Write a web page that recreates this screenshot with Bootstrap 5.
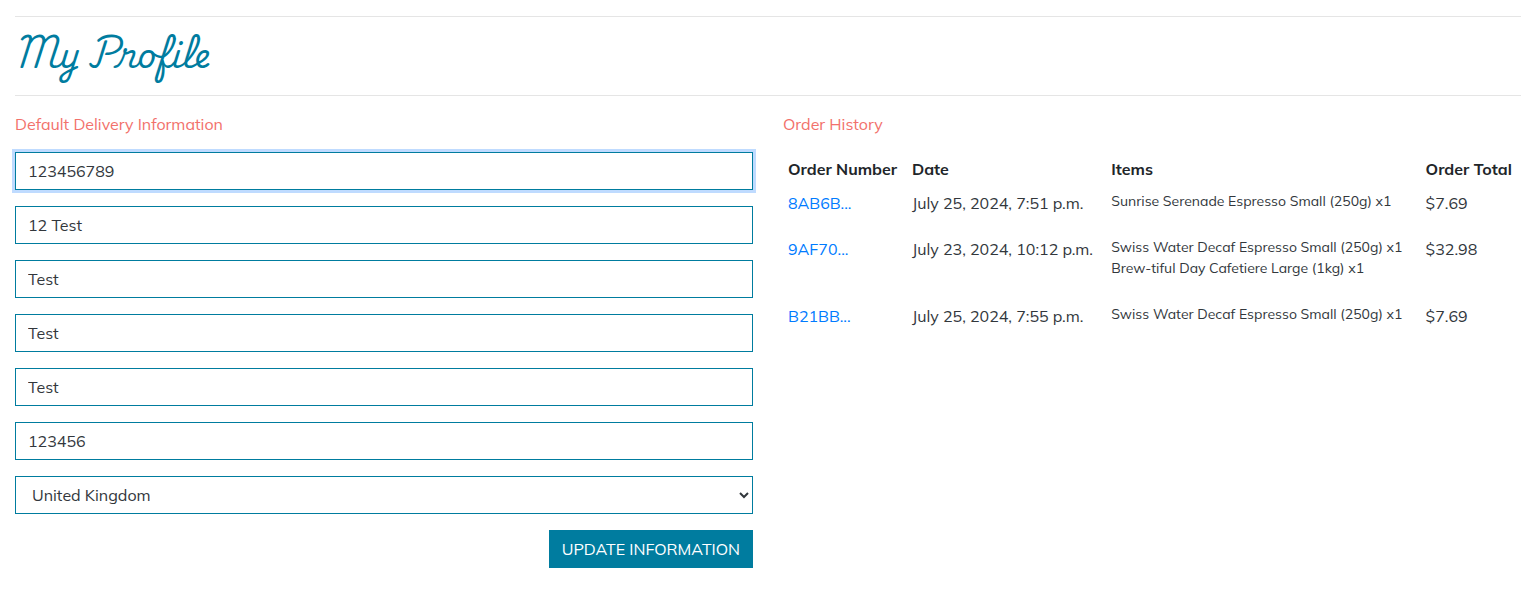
<!DOCTYPE html>
<html lang="en">
<head>
<meta charset="utf-8">
<meta name="viewport" content="width=device-width, initial-scale=1">
<title>My Profile</title>
<link href="https://cdn.jsdelivr.net/npm/bootstrap@5.3.0/dist/css/bootstrap.min.css" rel="stylesheet">
<style>
  :root { --brand: #007c9f; --accent: #f2716b; --ink: #32373c; }
  body { font-family: Mulish, Muli, Lato, sans-serif; font-size: 16px; color: var(--ink); }
  .profile-page { padding-left: 15px; padding-right: 3px; }
  .profile-row { --bs-gutter-x: 30px; }
  .rule { margin: 0; border-top: 1px solid #e5e5e5; opacity: 1; }
  .page-title { font-family: "Playwrite IE", "Playwrite US Trad", Lato, cursive; font-size: 32px; font-weight: 400; line-height: 70px; color: var(--brand); margin: 0; }
  .section-title { color: var(--accent); line-height: 24px; }
  .field { height: 38px; border: 1px solid var(--brand); border-radius: 0; color: var(--ink); caret-color: transparent; }
  .field:focus { border-color: var(--brand); box-shadow: 0 0 0 3px #bfdbff; color: var(--ink); }
  select.field { appearance: auto; }
  .btn-brand { --bs-btn-color: #fff; --bs-btn-bg: var(--brand); --bs-btn-border-color: var(--brand); --bs-btn-hover-color: #fff; --bs-btn-hover-bg: #00657f; --bs-btn-border-radius: 0; height: 38px; }
  .orders { table-layout: fixed; line-height: 24px; --bs-table-color: var(--ink); color: var(--ink); }
  .orders th, .orders td { padding: 5px; white-space: nowrap; }
  .orders th { font-weight: 700; color: #212529; }
  .orders a { color: #007bff; }
  .orders ul { font-size: 14px; line-height: 21px; margin-bottom: 15px; }
  .w-number { width: 16.8%; } .w-date { width: 27%; } .w-items { width: 42.6%; }
</style>
</head>
<body>
<main class="container-fluid profile-page pt-3">
  <hr class="rule">
  <h1 class="page-title pb-2">My Profile</h1>
  <hr class="rule">
  <div class="row profile-row pt-3">
    <section class="col-12 col-lg-6">
      <p class="section-title mb-3">Default Delivery Information</p>
      <form>
        <input class="form-control field mb-3" type="text" aria-label="Phone Number" value="123456789" autofocus>
        <input class="form-control field mb-3" type="text" aria-label="Street Address 1" value="12 Test">
        <input class="form-control field mb-3" type="text" aria-label="Street Address 2" value="Test">
        <input class="form-control field mb-3" type="text" aria-label="Town or City" value="Test">
        <input class="form-control field mb-3" type="text" aria-label="County" value="Test">
        <input class="form-control field mb-3" type="text" aria-label="Postal Code" value="123456">
        <select class="form-control field mb-3" aria-label="Country"><option>United Kingdom</option></select>
        <div class="text-end"><button type="button" class="btn btn-brand text-uppercase">Update Information</button></div>
      </form>
    </section>
    <section class="col-12 col-lg-6">
      <p class="section-title mb-3">Order History</p>
      <div class="table-responsive">
        <table class="table table-borderless orders mb-0">
          <thead>
            <tr><th class="w-number" scope="col">Order Number</th><th class="w-date" scope="col">Date</th><th class="w-items" scope="col">Items</th><th scope="col">Order Total</th></tr>
          </thead>
          <tbody>
            <tr><td><a class="text-decoration-none" href="#">8AB6B...</a></td><td>July 25, 2024, 7:51 p.m.</td><td><ul class="list-unstyled"><li>Sunrise Serenade Espresso Small (250g) x1</li></ul></td><td>$7.69</td></tr>
            <tr><td><a class="text-decoration-none" href="#">9AF70...</a></td><td>July 23, 2024, 10:12 p.m.</td><td><ul class="list-unstyled"><li>Swiss Water Decaf Espresso Small (250g) x1</li><li>Brew-tiful Day Cafetiere Large (1kg) x1</li></ul></td><td>$32.98</td></tr>
            <tr><td><a class="text-decoration-none" href="#">B21BB...</a></td><td>July 25, 2024, 7:55 p.m.</td><td><ul class="list-unstyled"><li>Swiss Water Decaf Espresso Small (250g) x1</li></ul></td><td>$7.69</td></tr>
          </tbody>
        </table>
      </div>
    </section>
  </div>
</main>
<script src="https://cdn.jsdelivr.net/npm/bootstrap@5.3.0/dist/js/bootstrap.bundle.min.js"></script>
</body>
</html>
